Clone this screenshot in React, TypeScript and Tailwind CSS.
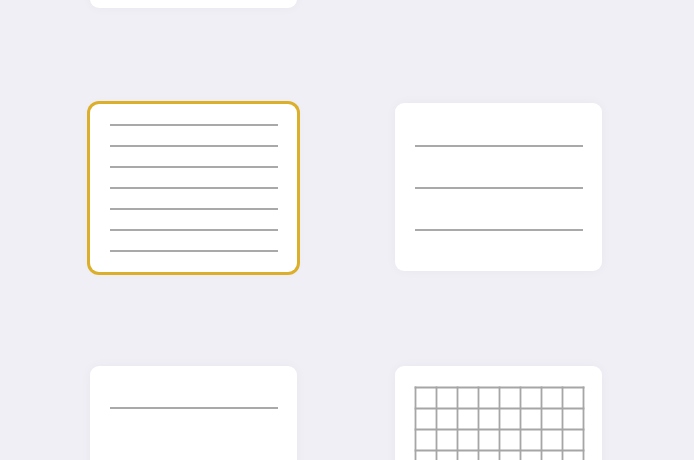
const Lines = ({ top, gap, count }: { top: number; gap: number; count: number }) => (
  <div className="flex flex-col px-[20px] pr-[19px]" style={{ paddingTop: top - 1, rowGap: gap - 1.5 }}>
    {Array.from({ length: count }).map((_, i) => (
      <div key={i} className="h-[1.5px] w-full bg-[#a9a9a9]" />
    ))}
  </div>
);

const GridPaper = () => (
  <div className="pt-[20px] px-[19px]">
    <svg width="171" height="130" viewBox="0 0 171 130" className="block">
      {Array.from({ length: 9 }).map((_, i) => (
        <line key={"v" + i} x1={i * 21 + 1.5} y1="0.6" x2={i * 21 + 1.5} y2="130" stroke="#a6a6a6" strokeWidth="1.8" />
      ))}
      {Array.from({ length: 7 }).map((_, i) => (
        <line key={"h" + i} x1="0.6" y1={i * 21 + 1.5} x2="170.4" y2={i * 21 + 1.5} stroke="#a6a6a6" strokeWidth="1.8" />
      ))}
    </svg>
  </div>
);

const Card = ({ selected, children }: { selected?: boolean; children?: React.ReactNode }) => (
  <div
    className={
      "h-[168px] w-[207px] rounded-[9px] bg-white overflow-hidden shadow-[0_0_12px_rgba(0,0,0,0.035)] " +
      (selected ? "ring-[3px] ring-[#dcaf2a] translate-y-px" : "")
    }
  >
    {children}
  </div>
);

export default function App() {
  return (
    <div className="w-[694px] h-[460px] overflow-hidden bg-[#efeff5]">
      <div className="grid grid-cols-[207px_207px] gap-x-[98px] gap-y-[95px] ml-[90px] mt-[-160px]">
        <Card />
        <div />
        <Card selected>
          <Lines top={21} gap={21} count={7} />
        </Card>
        <Card>
          <Lines top={43} gap={42} count={3} />
        </Card>
        <Card>
          <Lines top={42} gap={84} count={2} />
        </Card>
        <Card>
          <GridPaper />
        </Card>
      </div>
    </div>
  );
}
